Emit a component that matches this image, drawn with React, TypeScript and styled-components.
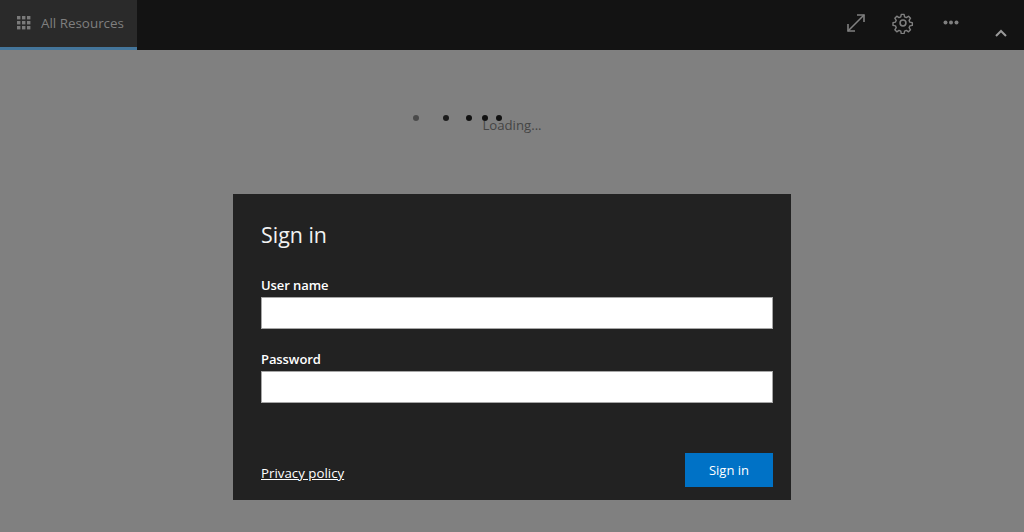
import styled, {createGlobalStyle} from "styled-components";

const GlobalStyle = createGlobalStyle`
  html, body {
    margin: 0;
    height: 100%;
    background-color: #808080;
    font-family: "Open Sans", "Noto Sans", "Liberation Sans", sans-serif;
    overflow: hidden;
  }
`;

const Page = styled.div`
  width: 1024px;
  height: 532px;
  display: flex;
  flex-direction: column;
  background-color: #808080;
`;

const TopBar = styled.header`
  height: 50px;
  flex-shrink: 0;
  display: flex;
  justify-content: space-between;
  background-color: #131313;
`;

const ResourcesTab = styled.div`
  width: 137px;
  box-sizing: border-box;
  display: flex;
  align-items: center;
  gap: 10px;
  padding: 0 0 1px 17px;
  background-color: #2a2a2a;
  border-bottom: 3px solid #44759a;
  color: #7f7f7f;
  font-size: 13.4px;
`;

const Actions = styled.div`
  display: flex;
`;

const ActionButton = styled.div<{$width: number; $paddingTop?: number}>`
  width: ${(p) => p.$width}px;
  display: flex;
  justify-content: center;
  padding-top: ${(p) => p.$paddingTop ?? 12}px;
  color: #808080;
`;

const LoadingArea = styled.div`
  height: 144px;
  flex-shrink: 0;
  position: relative;
  display: flex;
  justify-content: center;
  padding-top: 66px;
  box-sizing: border-box;
  color: #454545;
  font-size: 13.2px;
  line-height: 19px;
`;

const Dot = styled.span<{$x: number; $color: string}>`
  position: absolute;
  top: 64.5px;
  left: ${(p) => p.$x}px;
  width: 6px;
  height: 6px;
  border-radius: 50%;
  background-color: ${(p) => p.$color};
`;

const Dialog = styled.form`
  width: 558px;
  height: 306px;
  box-sizing: border-box;
  margin: 0 auto;
  padding: 24px 18px 13px 28px;
  display: flex;
  flex-direction: column;
  background-color: #222222;
  color: #ffffff;
`;

const Title = styled.h1`
  margin: 0 0 24px 0;
  font-size: 21.4px;
  font-weight: 400;
  line-height: 34px;
  color: #f2f2f2;
`;

const Label = styled.label`
  display: block;
  height: 19px;
  margin-bottom: 2px;
  font-size: 13px;
  font-weight: 600;
  line-height: 19px;
  letter-spacing: -0.08px;
`;

const Field = styled.input`
  display: block;
  width: 100%;
  height: 32px;
  box-sizing: border-box;
  margin-bottom: 21px;
  border: 1px solid #a6a6a6;
  border-radius: 0;
  background-color: #ffffff;
  outline: none;
`;

const Footer = styled.div`
  margin-top: auto;
  display: flex;
  justify-content: space-between;
  align-items: flex-end;
`;

const PrivacyLink = styled.a`
  color: #ffffff;
  font-size: 13.3px;
  line-height: 19px;
  margin-bottom: 4px;
  text-decoration: underline;
`;

const SignInButton = styled.button`
  width: 88px;
  height: 34px;
  padding: 0;
  border: none;
  background-color: #0072c6;
  color: #ffffff;
  font-family: inherit;
  font-size: 13px;
`;

const dots = [
  {x: 413, color: "#4a4a4a"},
  {x: 443, color: "#1c1c1c"},
  {x: 466, color: "#111111"},
  {x: 482, color: "#111111"},
  {x: 496, color: "#111111"},
];

const GridIcon = () => (
  <svg width="14" height="14" viewBox="0 0 14 14" fill="#7a7a7a">
    {[0, 5, 10].map((y) =>
      [0, 5, 10].map((x) => <rect key={`${x}-${y}`} x={x} y={y} width="3.4" height="3.4" />)
    )}
  </svg>
);

const ExpandIcon = () => (
  <svg width="20" height="20" viewBox="0 0 20 20" fill="none" stroke="currentColor" strokeWidth="1.6">
    <path d="M2 18 L18 2" />
    <path d="M11 2 H18 V9" />
    <path d="M2 11 V18 H9" />
  </svg>
);

const GearIcon = () => (
  <svg width="22" height="22" viewBox="0 0 24 24" fill="none" stroke="currentColor" strokeWidth="1.7" strokeLinejoin="round">
    <circle cx="12" cy="12" r="3.2" />
    <path d="M10.3 2h3.4l.6 3 2.2.9 2.6-1.7 2.4 2.4-1.7 2.6.9 2.2 3 .6v-.1 3.4l-3 .6-.9 2.2 1.7 2.6-2.4 2.4-2.6-1.7-2.2.9-.6 3h-3.4l-.6-3-2.2-.9-2.6 1.7-2.4-2.4 1.7-2.6-.9-2.2-3-.6v-3.4l3-.6.9-2.2-1.7-2.6 2.4-2.4 2.6 1.7 2.2-.9z" transform="translate(12 12) scale(.9) translate(-12.4 -12.4)" />
  </svg>
);

const MoreIcon = () => (
  <svg width="16" height="20" viewBox="0 0 16 20" fill="currentColor">
    <circle cx="2.5" cy="10.5" r="2" />
    <circle cx="8" cy="10.5" r="2" />
    <circle cx="13.5" cy="10.5" r="2" />
  </svg>
);

const ChevronIcon = () => (
  <svg width="14" height="8" viewBox="0 0 14 8" fill="none" stroke="#9a9a9a" strokeWidth="2">
    <path d="M3 7 L8 2 L13 7" />
  </svg>
);

export default function App() {
  return (
    <Page>
      <GlobalStyle />
      <TopBar>
        <ResourcesTab>
          <GridIcon />
          All Resources
        </ResourcesTab>
        <Actions>
          <ActionButton $width={48} $paddingTop={13}><ExpandIcon /></ActionButton>
          <ActionButton $width={46}><GearIcon /></ActionButton>
          <ActionButton $width={50}><MoreIcon /></ActionButton>
          <ActionButton $width={48} $paddingTop={29}><ChevronIcon /></ActionButton>
        </Actions>
      </TopBar>
      <LoadingArea>
        {dots.map((d) => (
          <Dot key={d.x} $x={d.x} $color={d.color} />
        ))}
        Loading...
      </LoadingArea>
      <Dialog>
        <Title>Sign in</Title>
        <Label>User name</Label>
        <Field type="text" />
        <Label>Password</Label>
        <Field type="password" />
        <Footer>
          <PrivacyLink>Privacy policy</PrivacyLink>
          <SignInButton type="button">Sign in</SignInButton>
        </Footer>
      </Dialog>
    </Page>
  );
}
